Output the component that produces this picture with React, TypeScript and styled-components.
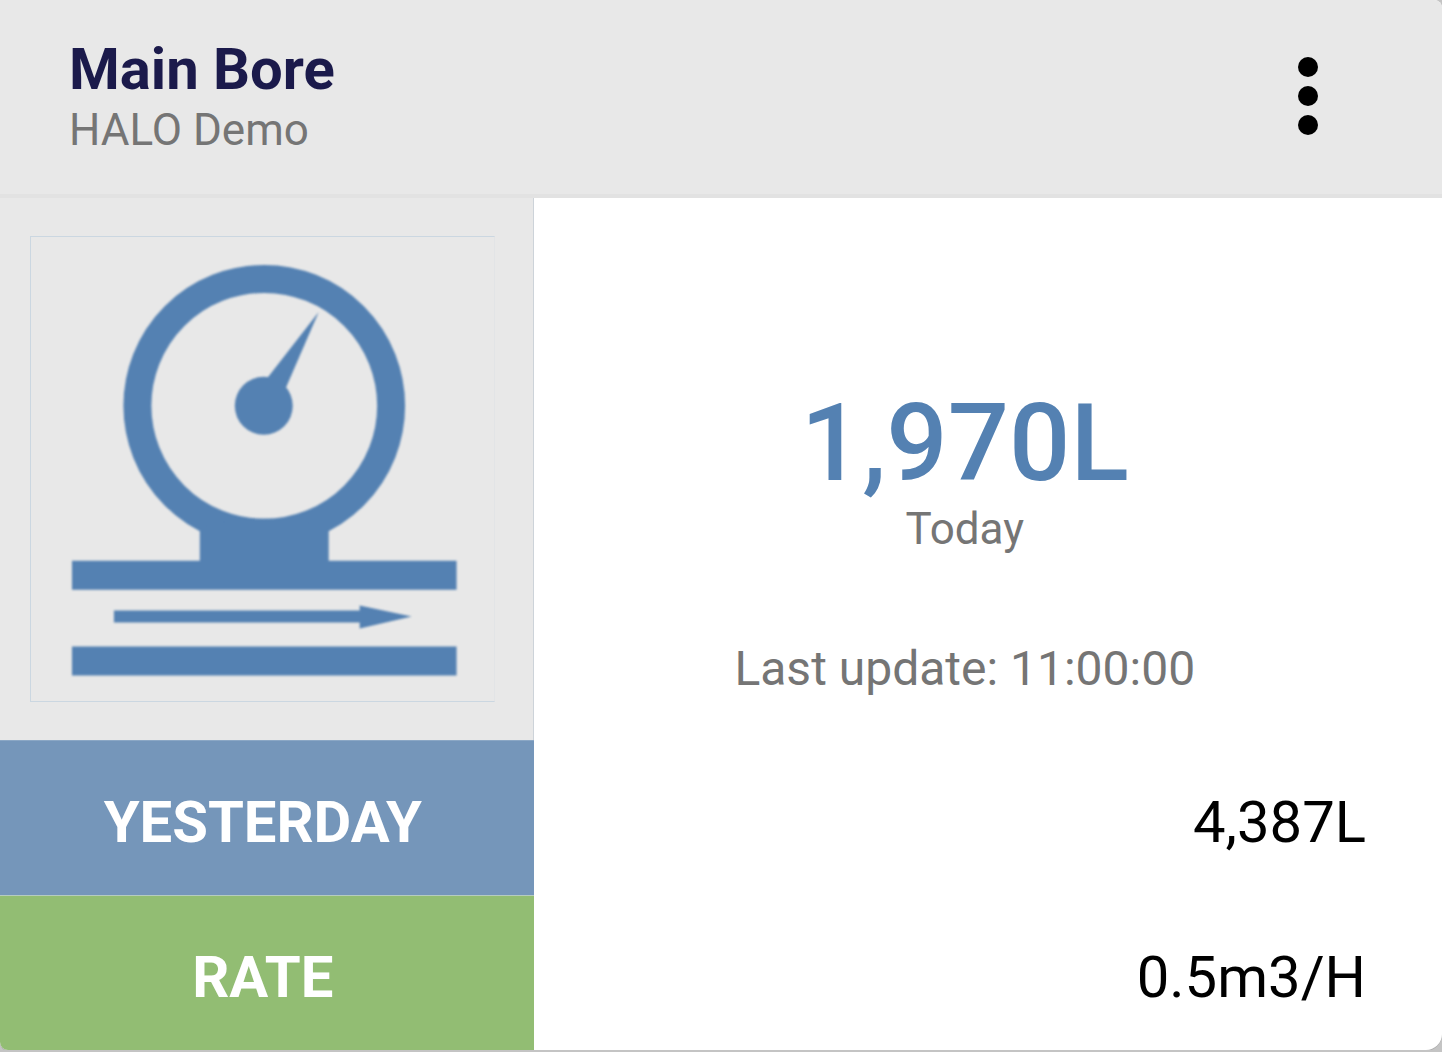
import React from 'react';
import styled, { createGlobalStyle } from 'styled-components';

const GlobalStyle = createGlobalStyle`
  * { box-sizing: border-box; }
  body {
    margin: 0;
    background: #c4c4c4;
    font-family: Roboto, "Liberation Sans", sans-serif;
  }
`;

const Card = styled.article`
  overflow: hidden;
  border-radius: 0 8px 16px 8px;
  background: #fff;
  box-shadow: 0 1px 0 #b0b0b0;
`;

const Header = styled.header`
  display: flex;
  align-items: center;
  justify-content: space-between;
  padding: 36px 124px 36px 69px;
  background: #e8e8e8;
  border-bottom: 4px solid #e2e2e2;
`;

const Title = styled.h1`
  margin: 0;
  font-size: 58px;
  line-height: 66px;
  font-weight: 700;
  color: #1b1a4b;
`;

const Subtitle = styled.p`
  margin: 0;
  font-size: 44px;
  line-height: 56px;
  color: #757575;
`;

const MenuButton = styled.button`
  display: flex;
  padding: 0;
  border: 0;
  background: none;
  color: #000;
  cursor: pointer;
`;

const Body = styled.div`
  display: grid;
  grid-template-columns: 37% 1fr;
`;

const IconCell = styled.div`
  padding: 38px 38px 38px 30px;
  background: #e8e8e8;
  border-right: 1px solid #cdd3d9;
`;

const IconFrame = styled.div`
  border: 1px solid #cbd7e1;
  border-right-color: #e2e4e6;
`;

const MeterIcon = styled.svg`
  display: block;
  width: 100%;
  height: auto;
  filter: blur(1px);
`;

const Reading = styled.section`
  display: flex;
  flex-direction: column;
  align-items: center;
  justify-content: flex-end;
  padding: 0 46px 39px 0;
`;

const Total = styled.strong`
  font-size: 108px;
  line-height: 116px;
  font-weight: 500;
  color: #5481b2;
`;

const Period = styled.span`
  font-size: 44px;
  line-height: 56px;
  color: #757575;
`;

const Updated = styled.p`
  margin: 80px 0 0;
  font-size: 48px;
  line-height: 64px;
  color: #757575;
`;

const Label = styled.div<{ $color: string; $line: string }>`
  display: flex;
  align-items: center;
  justify-content: center;
  height: 155px;
  padding: 8px 8px 0 0;
  background: ${(p) => p.$color};
  border-top: 1px solid ${(p) => p.$line};
  font-size: 58px;
  font-weight: 700;
  color: #fff;
`;

const Value = styled.div`
  display: flex;
  align-items: center;
  justify-content: flex-end;
  padding: 10px 76px 0 0;
  font-size: 58px;
  color: #000;
`;

export default function App() {
  return (
    <>
      <GlobalStyle />
      <Card>
        <Header>
          <div>
            <Title>Main Bore</Title>
            <Subtitle>HALO Demo</Subtitle>
          </div>
          <MenuButton type="button" aria-label="More options">
            <svg width="20" height="80" viewBox="0 0 20 80" fill="currentColor" aria-hidden="true">
              <circle cx="10" cy="10" r="10" />
              <circle cx="10" cy="39" r="10" />
              <circle cx="10" cy="68" r="10" />
            </svg>
          </MenuButton>
        </Header>
        <Body>
          <IconCell>
            <IconFrame>
              <MeterIcon viewBox="31 237 463 464" fill="#5481b2" role="img" aria-label="Flow meter">
                <circle cx="264.5" cy="406" r="127" fill="none" stroke="#5481b2" strokeWidth="28" />
                <circle cx="264" cy="406" r="29" />
                <path d="M319 312 L267 379 L284 393 Z" />
                <path d="M200 528 Q232 519 265 519 Q298 519 329 528 V562 H200 Z" />
                <path d="M72 561H457V590H72Z M72 647H457V676H72Z" />
                <path d="M114 611H360V606L412 617L360 629V623H114Z" />
              </MeterIcon>
            </IconFrame>
          </IconCell>
          <Reading>
            <Total>1,970L</Total>
            <Period>Today</Period>
            <Updated>Last update: 11:00:00</Updated>
          </Reading>
          <Label $color="#7596ba" $line="#8ba7c5">YESTERDAY</Label>
          <Value>4,387L</Value>
          <Label $color="#92bd73" $line="#b5ccc0">RATE</Label>
          <Value>0.5m3/H</Value>
        </Body>
      </Card>
    </>
  );
}
